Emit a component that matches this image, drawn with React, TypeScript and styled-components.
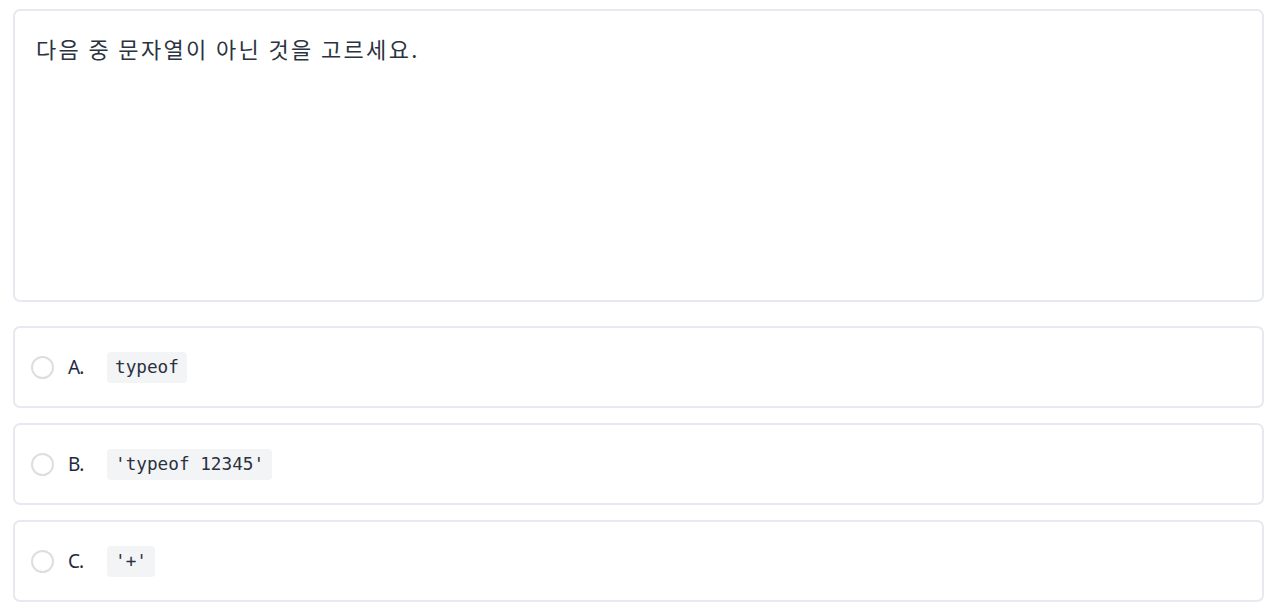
import React from "react";
import styled, { createGlobalStyle } from "styled-components";

const Global = createGlobalStyle`
  html, body { margin: 0; padding: 0; background: #ffffff; }
  body { font-family: "Noto Sans", "Noto Sans CJK KR", sans-serif; color: #1f2a37; }
`;

const Page = styled.div`
  display: flex;
  flex-direction: column;
  padding: 9px 16px 0 13px;
`;

const QuestionCard = styled.div`
  box-sizing: border-box;
  height: 293px;
  border: 2px solid #e6e9f0;
  border-radius: 7px;
  padding: 22px 21px;
  font-family: "Noto Sans CJK KR", sans-serif;
  font-size: 22px;
  letter-spacing: 2.35px;
  line-height: 30px;
  color: #2b3340;
  margin-bottom: 24px;
`;

const Options = styled.div`
  display: flex;
  flex-direction: column;
  gap: 15px;
`;

const OptionCard = styled.label`
  box-sizing: border-box;
  height: 82px;
  border: 2px solid #e6e9f0;
  border-radius: 7px;
  display: flex;
  align-items: center;
  padding: 0 16px;
  cursor: pointer;
`;

const Radio = styled.span`
  box-sizing: border-box;
  width: 23px;
  height: 23px;
  border: 2px solid #dddee1;
  border-radius: 50%;
  flex-shrink: 0;
  margin-right: 14px;
`;

const Letter = styled.span`
  font-family: "Noto Sans", sans-serif;
  font-size: 19px;
  color: #1f2a40;
  width: 39px;
  letter-spacing: -1px;
`;

const Code = styled.code`
  font-family: "DejaVu Sans Mono", monospace;
  font-size: 17.7px;
  line-height: 31px;
  background: #f3f4f5;
  color: #2a3140;
  border-radius: 4px;
  padding: 0 8px;
  white-space: pre;
`;

const options = [
  { letter: "A.", code: "typeof" },
  { letter: "B.", code: "'typeof 12345'" },
  { letter: "C.", code: "'+'" },
];

export default function App() {
  return (
    <>
      <Global />
      <Page>
        <QuestionCard>다음 중 문자열이 아닌 것을 고르세요.</QuestionCard>
        <Options>
          {options.map((o) => (
            <OptionCard key={o.letter}>
              <Radio />
              <Letter>{o.letter}</Letter>
              <Code>{o.code}</Code>
            </OptionCard>
          ))}
        </Options>
      </Page>
    </>
  );
}
